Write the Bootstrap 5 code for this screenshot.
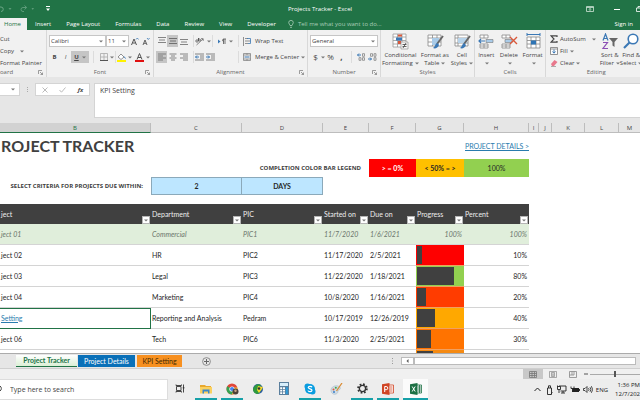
<!DOCTYPE html>
<html lang="en">
<head>
<meta charset="utf-8">
<meta name="viewport" content="width=device-width, initial-scale=1">
<title>Projects Tracker - Excel</title>
<link href="https://cdn.jsdelivr.net/npm/bootstrap@5.3.0/dist/css/bootstrap.min.css" rel="stylesheet">
<style>
body{font:6px/8px "Open Sans","Noto Sans",sans-serif;color:#444;background:#e6e6e6}
svg{display:block;flex:none}
button,.lnk{border:0;background:none;padding:0;color:inherit;font:inherit;text-decoration:none;flex:none}
.cr{width:4px;height:3px;fill:#777}
/* title and ribbon tabs */
.top-bar{background:#217346;color:#fff;flex:none}
.title-row{height:18px}
.tabs-row{height:12px;gap:1px}
.tabs-row .lnk{padding:0 7px;line-height:12px}
.tabs-row .lnk.on{background:#f1f1f1;color:#217346;padding:0 6px 0 4px}
.tell{color:#a9cdb8}
.side{flex:1 1 0}
/* ribbon */
.ribbon{background:#f1f1f1;height:47px;flex:none;overflow:hidden}
.grp{border-right:1px solid #d8d8d8;flex:none;padding:3px 2px 0}
.grp-name{height:9px;line-height:9px;color:#666;text-align:center;position:relative}
.grp-name svg{position:absolute;right:1px;top:2px}
.body35{height:35px}
.rw{height:16px;display:flex;align-items:center}
.ic{width:11px;height:12px;display:flex;align-items:center;justify-content:center}
.ic.on,.ul-on{background:#c5c5c5}
.ic.glyph{font-size:8px}
.ul-on{width:18px;height:12px;display:flex;align-items:center;justify-content:space-evenly}
.dv{width:1px;height:12px;background:#dcdcdc;flex:none}
.car{width:7px;height:12px;display:flex;align-items:center;justify-content:center}
select.pick{appearance:none;border:1px solid #c6c6c6;border-radius:0;background:#fff url("data:image/svg+xml,%3Csvg xmlns='http://www.w3.org/2000/svg' width='4' height='3'%3E%3Cpath d='M0 .5h4L2 2.5z' fill='%23777'/%3E%3C/svg%3E") no-repeat right 2px center;height:12px;padding:0 0 0 1px;color:#444;font:6px/10px "Open Sans",sans-serif}
.w-font{width:57px}.w-size{width:23px}.w-num{width:68px}
.big{display:flex;flex-direction:column;align-items:center;text-align:center;height:35px;white-space:nowrap}
.big svg.pic{width:18px;height:17px;margin-bottom:1px}
.big .cr{display:inline-block;margin-left:2px}
.line3{height:12px;display:flex;align-items:center;gap:2px}
.w-clip{width:47px}.w-fontg{width:107px}.w-align{width:154px}.w-numg{width:73px}.w-styles{width:94px}.w-cells{width:71px}
/* formula bar */
.formula{height:46px;flex:none;padding-top:6px}
.name-box{width:20px;height:13px;background:#fff;border:1px solid #d4d4d4;border-left:0}
.fx-box{width:55px;height:13px;background:#fff;border:1px solid #d4d4d4}
.fx-in{height:35px;border:1px solid #d4d4d4;border-right:0;background:#fff;padding:2px 5px;resize:none;font:7px/9px "Open Sans",sans-serif;color:#444;border-radius:0;display:block;flex:1 1 0;min-width:0}
/* worksheet */
.sheet{background:#fff;min-height:0}
.gridt{table-layout:fixed;width:100%;border-collapse:separate;border-spacing:0;font:7px/9px Lato,"Open Sans",sans-serif;color:#262626}
.gridt td,.gridt th{padding:0 1px;overflow:hidden;white-space:nowrap;vertical-align:middle;font-weight:400}
.heads th{height:10px;background:#e6e6e6;border-right:1px solid #bdbdbd;border-bottom:1px solid #bdbdbd;text-align:center;font:6px/8px "Open Sans",sans-serif;color:#444}
.heads th.on{background:#d2d2d2;color:#217346;border-bottom:1px solid #217346}
.r26 td{height:26px}.r18 td{height:18px}.r9 td{height:9px}
.gridt .big-title{font:700 16px/22px Lato,sans-serif;color:#404040}
.gridt .leg{text-align:center}
.bgr{background:#f00;color:#fff}.bgo{background:#ffc000}.bgg{background:#92d050}
.gridt .pickc{background:#bde6ff;border:1px solid #8ba9ba;text-align:center;font-weight:700}
.gridt .cap{font:700 6px/9px "Open Sans",sans-serif;text-align:right;color:#404040}
.a-blue{color:#2a7cae;text-decoration:underline}
.fields th{height:20px;background:#404040;color:#eee}
.fields .fx{height:20px;display:flex;justify-content:space-between;align-items:flex-end}
.fields .fx span{line-height:18px;align-self:flex-start;padding-top:1px}
.flt{width:8px;height:8px;background:#fff;border:1px solid #b5b5b5;display:flex;align-items:center;justify-content:center}
.rec td{height:21px;border-bottom:1px solid #d4d4d4}
.rec.done td{background:#e0eedb;color:#6b756b;font-style:italic;height:21px}
.rec td.none,.rec.done td.none{background:#fff;border:0}
.rec .num{text-align:right;padding-right:2px}
.rec td.pg{padding:0;border-bottom-color:#f0a060}
.track{height:20px;padding:1px}
.track i{display:block;height:18px;background:#404040}
.c1{background:#fe0000}.c2{background:#92d050}.c3{background:#ff3c00}.c4{background:#ffa800}.c5{background:#ff7300}.c6{background:#f58a12}
.gridt td.sel{box-shadow:inset -1px 0 #217346,inset 0 1px #217346;border-bottom-color:#217346}
/* sheet tabs, status */
.sheet-tabs{height:15px;background:#e6e6e6;border-top:1px solid #ababab;flex:none;font:7px/11px Lato,sans-serif}
.stab{height:12px;line-height:11px;color:#fff}
.stab.on{background:linear-gradient(#fff,#dcefd6);color:#217346;font-weight:700;border-bottom:1px solid #217346;width:61px}
.stab.s2{background:#0a70b8;width:57px;margin:0 2px 0 1px}.stab.s3{background:#f79020;color:#402800;width:45px}
.nav-pad{width:16px}
.scroller{width:38.8%}
.thumb{height:8px;background:#fff;border:1px solid #bbb}
.status{height:11px;background:#f0f0f0;border-top:1px solid #cfcfcf;flex:none}
.vw{width:20px;height:10px;display:flex;align-items:center;justify-content:center}
.vw.on{background:#c8c8c8}
.zoom{width:50px;height:10px;appearance:none;background:linear-gradient(#aaa,#aaa) center/100% 1px no-repeat;margin:0}
.zoom::-webkit-slider-thumb{appearance:none;width:2px;height:6px;background:#555;border-radius:0}
/* taskbar */
.taskbar{height:21px;background:#ededed;flex:none}
.find{width:168px;background:#fff;border:1px solid #ddd;border-left:0;height:21px}
.find input{border:0;background:none;font:7px/12px "Open Sans",sans-serif;color:#333;padding:0;width:130px;outline:0}
.find input::placeholder{color:#444;opacity:1}
.apps{gap:4px;margin-left:1px}
.app{width:22px;height:21px;display:flex;align-items:center;justify-content:center;border-bottom:2px solid transparent}
.app.run{border-bottom-color:#16a0a8}
.app.cur{background:#fbfbfb;width:25px}
.clock{text-align:right;line-height:9px;flex:none;color:#222}
.tray{color:#222;gap:3px}
</style>
<script src="https://cdn.jsdelivr.net/npm/bootstrap@5.3.0/dist/js/bootstrap.bundle.min.js"></script>
</head>
<body class="d-flex flex-column vh-100 overflow-hidden m-0">
<svg width="0" height="0" class="position-absolute" aria-hidden="true">
<symbol id="c" viewBox="0 0 4 3"><path d="M0 .5h4L2 2.5z"/></symbol>
<symbol id="l" viewBox="0 0 5 5"><path d="M.5 4V.5H4M2 2l2.500 2.500M4.500 2.500v2h-2" fill="none" stroke="#777" stroke-width=".7"/></symbol>
</svg>

<header class="top-bar">
 <div class="title-row d-flex align-items-center">
  <div class="side d-flex align-items-center">
   <button aria-label="Undo"><svg width="12" height="8" viewBox="0 0 12 8"><path d="M0 2h1a2.200 2.200 0 010 4.500" fill="none" stroke="#6ba585"/><path d="M8.500 3h3L10 5z" fill="#5d9c79"/></svg></button>
   <button aria-label="Redo" class="ms-2"><svg width="14" height="8" viewBox="0 0 14 8"><path d="M6.500 2.500H3a2 2 0 000 4h1M4.500.5l2.200 2-2.200 2" fill="none" stroke="#5d9c79"/><path d="M11.500 3h2.500l-1.200 2z" fill="#5d9c79"/></svg></button>
   <button aria-label="Customize toolbar" class="ms-2 ps-1"><svg width="4" height="6" viewBox="0 0 4 6"><path d="M0 0h4v1H0zM0 2.500h4L2 5z" fill="#fff"/></svg></button>
  </div>
  <div>Projects Tracker - Excel</div>
  <div class="side d-flex align-items-center justify-content-end">
   <button aria-label="Ribbon display" class="me-3"><svg width="8" height="6" viewBox="0 0 8 6"><path d="M.5.5h7v5h-7zM.5 1.500h7M4 5V2.500M3 3.500l1-1 1 1" fill="none" stroke="#cfe3d7" stroke-width=".8"/></svg></button>
   <button aria-label="Minimize" class="ms-1 me-3"><svg width="6" height="6" viewBox="0 0 6 6"><path d="M0 3.500h6" stroke="#fff"/></svg></button>
   <button aria-label="Restore"><svg width="4" height="6" viewBox="0 0 4 6"><path d="M4 2H.5v3.500H4M2 2V.5h2" fill="none" stroke="#fff" stroke-width=".8"/></svg></button>
  </div>
 </div>
 <nav class="tabs-row d-flex">
  <a href="#" class="lnk on">Home</a><a href="#" class="lnk">Insert</a><a href="#" class="lnk">Page Layout</a><a href="#" class="lnk">Formulas</a><a href="#" class="lnk">Data</a><a href="#" class="lnk">Review</a><a href="#" class="lnk">View</a><a href="#" class="lnk">Developer</a>
  <button class="tell d-flex align-items-center gap-1 ps-1"><svg width="6" height="8" viewBox="0 0 6 8"><path d="M2 5.500C2 4.500.7 4 .7 2.700a2.300 2.300 0 014.600 0C5.300 4 4 4.500 4 5.500zM2 7.300h2" fill="none" stroke="#a9cdb8" stroke-width=".8"/></svg>Tell me what you want to do...</button>
  <a href="#" class="lnk ms-auto">Sign in</a>
 </nav>
</header>

<section class="ribbon d-flex">
 <div class="grp w-clip ps-0">
  <div class="body35">
   <button class="line3">Cut</button>
   <button class="line3">Copy <svg class="cr ms-1"><use href="#c"/></svg></button>
   <button class="line3 text-nowrap">Format Painter</button>
  </div>
  <div class="grp-name text-start">oard<svg width="5" height="5"><use href="#l"/></svg></div>
 </div>
 <div class="grp w-fontg">
  <div class="body35">
   <div class="rw"><select class="pick w-font" aria-label="Font"><option>Calibri</option></select><select class="pick w-size" aria-label="Font size"><option>11</option></select>
    <button class="ic" aria-label="Grow font"><svg width="8" height="9" viewBox="0 0 8 9"><path d="M.5 8L3 2l2.500 6M1.500 6h3" fill="none" stroke="#555"/><path d="M5 2.500L6.300 1l1.300 1.500" fill="none" stroke="#3b78b5" stroke-width=".8"/></svg></button>
    <button class="ic" aria-label="Shrink font"><svg width="8" height="9" viewBox="0 0 8 9"><path d="M1 8l2-5 2 5M1.800 6.300h2.400" fill="none" stroke="#555" stroke-width=".9"/><path d="M5 1l1.300 1.500L7.600 1" fill="none" stroke="#3b78b5" stroke-width=".8"/></svg></button></div>
   <div class="rw"><button class="ic fw-bold">B</button><button class="ic fst-italic">I</button><button class="ul-on" aria-label="Underline"><b class="text-decoration-underline">U</b><svg class="cr"><use href="#c"/></svg></button><span class="dv ms-1"></span>
    <button class="ic ms-1" aria-label="Borders"><svg width="8" height="8" viewBox="0 0 8 8"><path d="M.5.5h7v7h-7zM4 .5v7M.5 4h7" fill="none" stroke="#aaa" stroke-width=".8"/><path d="M0 7.500h8" stroke="#555"/></svg></button><span class="car"><svg class="cr"><use href="#c"/></svg></span><span class="dv"></span>
    <button class="ic" aria-label="Fill color"><svg width="9" height="9" viewBox="0 0 9 9"><path d="M1 4l3-3 3 3-3 2.500z" fill="#fff" stroke="#777" stroke-width=".8"/><path d="M7 3.500l1.500 2" stroke="#3b78b5"/><path d="M0 7h9v2H0z" fill="#fff200"/></svg></button><span class="car"><svg class="cr"><use href="#c"/></svg></span>
    <button class="ic" aria-label="Font color"><svg width="9" height="9" viewBox="0 0 9 9"><path d="M2 6.500l2.500-6 2.500 6M3 4.500h3" fill="none" stroke="#555"/><path d="M0 7h9v2H0z" fill="#e01010"/></svg></button><span class="car"><svg class="cr"><use href="#c"/></svg></span></div>
  </div>
  <div class="grp-name">Font<svg width="5" height="5"><use href="#l"/></svg></div>
 </div>
 <div class="grp w-align">
  <div class="body35 d-flex">
   <div>
    <div class="rw"><button class="ic" aria-label="Top"><svg width="8" height="8" viewBox="0 0 8 8"><path d="M0 .5h8M1 3h6M0 5.500h8" stroke="#777" stroke-width=".9"/></svg></button><button class="ic on" aria-label="Middle"><svg width="8" height="8" viewBox="0 0 8 8"><path d="M0 1.500h8M1 4h6M0 6.500h8" stroke="#666" stroke-width=".9"/></svg></button><button class="ic" aria-label="Bottom"><svg width="8" height="8" viewBox="0 0 8 8"><path d="M0 2.500h8M1 5h6M0 7.500h8" stroke="#777" stroke-width=".9"/></svg></button><span class="dv ms-1"></span>
     <button class="ic" aria-label="Orientation"><svg width="9" height="9" viewBox="0 0 9 9"><path d="M1.500 8L8 2M6 1.700l2.200 0v2.200" fill="none" stroke="#666" stroke-width=".8"/><circle cx="2" cy="4" r="1.200" fill="none" stroke="#555" stroke-width=".8"/><path d="M3.500 1v3" stroke="#555"/><circle cx="4.500" cy="3" r="1" fill="none" stroke="#555" stroke-width=".8"/></svg></button><span class="car"><svg class="cr"><use href="#c"/></svg></span><span class="dv"></span></div>
    <div class="rw"><button class="ic on" aria-label="Left"><svg width="8" height="8" viewBox="0 0 8 8"><path d="M0 1h8M0 3h5M0 5h8M0 7h5" stroke="#777" stroke-width=".9"/></svg></button><button class="ic" aria-label="Center"><svg width="8" height="8" viewBox="0 0 8 8"><path d="M.5 1h7M2 3h4M.5 5h7M2 7h4" stroke="#777" stroke-width=".9"/></svg></button><button class="ic" aria-label="Right"><svg width="8" height="8" viewBox="0 0 8 8"><path d="M0 1h8M3 3h5M0 5h8M3 7h5" stroke="#777" stroke-width=".9"/></svg></button><span class="dv ms-1"></span>
     <button class="ic" aria-label="Decrease indent"><svg width="9" height="8" viewBox="0 0 9 8"><path d="M0 1h9M5 3h4M5 5h4M0 7h9" stroke="#777" stroke-width=".9"/><path d="M4 4H.5M2 2.500L.5 4 2 5.500" stroke="#3b78b5" fill="none"/></svg></button><button class="ic" aria-label="Increase indent"><svg width="9" height="8" viewBox="0 0 9 8"><path d="M0 1h9M5 3h4M5 5h4M0 7h9" stroke="#777" stroke-width=".9"/><path d="M0 4h3.500M2 2.500L3.500 4 2 5.500" stroke="#3b78b5" fill="none"/></svg></button></div>
   </div>
   <div class="rw"><button class="ic" aria-label="Text direction"><svg width="8" height="7" viewBox="0 0 8 7"><path d="M0 1.500L2.500 3.500 0 5.500z" fill="#3b78b5"/><path d="M5.500 6V1H8M7 1v5M5.500 1a1.300 1.300 0 000 2.500" fill="none" stroke="#555" stroke-width=".8"/></svg></button><span class="car"><svg class="cr"><use href="#c"/></svg></span></div>
   <div class="ms-1">
    <div class="rw"><span class="dv me-1"></span><button class="d-flex align-items-center gap-1"><svg width="8" height="9" viewBox="0 0 8 9"><path d="M.5 0v9M2 1.500h3M2 4h5.500M2 6.500h3" stroke="#777" stroke-width=".8"/><path d="M4 1.500h3.500v5H5" stroke="#3b78b5" fill="none" stroke-width=".8"/></svg>Wrap Text</button></div>
    <div class="rw"><span class="dv me-1"></span><button class="d-flex align-items-center gap-1 text-nowrap"><svg width="8" height="8" viewBox="0 0 8 8"><path d="M.5.5h7v7h-7zM.5 2h7M.5 6h7M4 .5V2M4 6v1.500" fill="none" stroke="#777" stroke-width=".7"/><path d="M1.500 4h5" stroke="#3b78b5"/></svg>Merge &amp; Center</button><span class="car"><svg class="cr"><use href="#c"/></svg></span></div>
   </div>
  </div>
  <div class="grp-name">Alignment<svg width="5" height="5"><use href="#l"/></svg></div>
 </div>
 <div class="grp w-numg">
  <div class="body35">
   <div class="rw"><select class="pick w-num" aria-label="Number format"><option>General</option></select></div>
   <div class="rw"><button class="ic glyph">$</button><span class="car"><svg class="cr"><use href="#c"/></svg></span><button class="ic glyph">%</button><button class="ic glyph fw-bold">,</button><span class="dv mx-1"></span>
    <button class="ic" aria-label="Increase decimal"><svg width="9" height="8" viewBox="0 0 9 8"><path d="M4 2H.5M2 .5L.5 2 2 3.500" stroke="#3b78b5" fill="none"/><path d="M5.500.7h2v2.600h-2zM2 4.700h2v2.600H2zM5.500 4.700h2v2.600h-2z" fill="none" stroke="#777" stroke-width=".7"/></svg></button><button class="ic" aria-label="Decrease decimal"><svg width="9" height="8" viewBox="0 0 9 8"><path d="M0 6h3.500M2 4.500L3.500 6 2 7.500" stroke="#3b78b5" fill="none"/><path d="M2.500.7h2v2.600h-2zM6 .7h2v2.600H6zM6 4.700h2v2.600H6z" fill="none" stroke="#777" stroke-width=".7"/></svg></button></div>
  </div>
  <div class="grp-name">Number<svg width="5" height="5"><use href="#l"/></svg></div>
 </div>
 <div class="grp w-styles px-0">
  <div class="body35 d-flex justify-content-around">
   <button class="big"><svg class="pic" viewBox="0 0 18 17"><path d="M2 1h13v13H2zM2 4h13M2 7.500h13M2 11h13M6.500 1v13M11 1v13" fill="#fff" stroke="#999" stroke-width=".8"/><path d="M7 1.500h4v2H7zM7 8h3v3H7z" fill="#d9583b"/><path d="M5 4.500h6v3H5z" fill="#3b78b5"/><path d="M10 9h7v7h-7z" fill="#f5f5f5" stroke="#888" stroke-width=".6"/><path d="M11.500 11.500h4M11.500 13.500h4M15 10l-3 5" stroke="#444" stroke-width=".8"/></svg><span>Conditional<br>Formatting<svg class="cr"><use href="#c"/></svg></span></button>
   <button class="big"><svg class="pic" viewBox="0 0 18 17"><path d="M2 2h13v11H2zM2 5h13M2 9h13M6.500 2v11M11 2v11" fill="#fff" stroke="#888" stroke-width=".8"/><path d="M6 5h7v7H6z" fill="#a9cbe8"/><path d="M17 3l-6 8" stroke="#666" stroke-width="1.800"/><path d="M11 10l2 2c-1 3-4 4-6 3 2-1 2-4 4-5z" fill="#3b78b5"/></svg><span>Format as<br>Table<svg class="cr"><use href="#c"/></svg></span></button>
   <button class="big"><svg class="pic" viewBox="0 0 18 17"><path d="M2 2h13v11H2zM2 5h13M2 10h13M5 2v11" fill="#fff" stroke="#888" stroke-width=".8"/><path d="M5 5h9v5H5z" fill="#b7d3ea"/><path d="M17 3l-6 8" stroke="#666" stroke-width="1.800"/><path d="M11 10l2 2c-1 3-4 4-6 3 2-1 2-4 4-5z" fill="#3b78b5"/></svg><span>Cell<br>Styles<svg class="cr"><use href="#c"/></svg></span></button>
  </div>
  <div class="grp-name">Styles</div>
 </div>
 <div class="grp w-cells px-0">
  <div class="body35 d-flex justify-content-around">
   <button class="big"><svg class="pic" viewBox="0 0 18 17"><path d="M3 2h8v3H3zM7 2v3M3 11h8v4H3zM7 11v4M3 13h8" fill="#fff" stroke="#888" stroke-width=".8"/><path d="M9 6.500h7v3H9z" fill="#a9cbe8" stroke="#777" stroke-width=".6"/><path d="M8 8H2M4 6L2 8l2 2" stroke="#3b78b5" fill="none" stroke-width="1.200"/></svg><span>Insert<br><svg class="cr"><use href="#c"/></svg></span></button>
   <button class="big"><svg class="pic" viewBox="0 0 18 17"><path d="M2 2h8v3H2zM6 2v3M2 11h8v4H2zM6 11v4M2 13h8" fill="#fff" stroke="#888" stroke-width=".8"/><path d="M5 6.500h7v3H5z" fill="#a9cbe8" stroke="#777" stroke-width=".6"/><path d="M10 4l7 7M17 4l-7 7" stroke="#d9583b" stroke-width="1.400"/></svg><span>Delete<br><svg class="cr"><use href="#c"/></svg></span></button>
   <button class="big"><svg class="pic" viewBox="0 0 18 17"><path d="M3 4h13v11H3zM3 7.500h13M3 11h13M7 4v11M12 4v11" fill="#fff" stroke="#888" stroke-width=".8"/><path d="M7 7.500h5v4H7z" fill="#2f75b5"/><path d="M3 1.500h13M3 0v3M16 0v3" stroke="#3b78b5"/></svg><span>Format<br><svg class="cr"><use href="#c"/></svg></span></button>
  </div>
  <div class="grp-name">Cells</div>
 </div>
 <div class="grp flex-fill border-0 ps-1 pe-0">
  <div class="body35 d-flex">
   <div>
    <button class="line3"><svg width="8" height="8" viewBox="0 0 8 8"><path d="M7 2V.8H1L4 4 1 7.200h6V6" fill="none" stroke="#444" stroke-width="1.200"/></svg>AutoSum<svg class="cr ms-1"><use href="#c"/></svg></button>
    <button class="line3"><svg width="8" height="8" viewBox="0 0 8 8"><path d="M.5.5h7v7h-7zM.5 2h7" fill="#fff" stroke="#777" stroke-width=".8"/><path d="M4 2.500V6M2.500 4.500L4 6.200l1.500-1.700" stroke="#3b78b5" fill="none"/></svg>Fill<svg class="cr"><use href="#c"/></svg></button>
    <button class="line3"><svg width="8" height="8" viewBox="0 0 8 8"><path d="M1 5l3.500-4L7.500 3 4 7H2z" fill="#e8788c"/><path d="M1 7.500h5" stroke="#999" stroke-width=".8"/></svg>Clear<svg class="cr"><use href="#c"/></svg></button>
   </div>
   <button class="big ms-1"><svg class="pic" viewBox="0 0 18 17"><path d="M2 7.500L4.500 1 7 7.500M3 5.500h3" fill="none" stroke="#3b78b5" stroke-width="1.200"/><path d="M2 9.500h4.500L2 15.500h5" fill="none" stroke="#8a4fb5" stroke-width="1.200"/><path d="M8 5h9l-3.500 4v5l-2-1.500V9z" fill="#666"/></svg><span>Sort &amp;<br>Filter<svg class="cr"><use href="#c"/></svg></span></button>
   <button class="big"><svg class="pic" viewBox="0 0 18 17"><circle cx="11" cy="6" r="4.800" fill="#fff" stroke="#3b78b5" stroke-width="1.600"/><path d="M7.500 9.500L2 15" stroke="#3b78b5" stroke-width="2.200"/></svg><span>Find &amp;<br>Select<svg class="cr"><use href="#c"/></svg></span></button>
  </div>
  <div class="grp-name">Editing</div>
 </div>
</section>

<section class="formula d-flex">
 <div class="name-box d-flex align-items-center justify-content-end pe-1"><svg class="cr"><use href="#c"/></svg></div>
 <svg width="15" height="13" viewBox="0 0 15 13"><path d="M7 4h1v1H7zM7 6h1v1H7zM7 8h1v1H7z" fill="#aaa"/></svg>
 <div class="fx-box d-flex align-items-center justify-content-around">
  <button aria-label="Cancel"><svg width="6" height="6" viewBox="0 0 6 6"><path d="M.5.5l5 5M5.500.5l-5 5" stroke="#bbb"/></svg></button>
  <button aria-label="Enter"><svg width="7" height="6" viewBox="0 0 7 6"><path d="M.5 3l2 2.200L6.500.5" fill="none" stroke="#bbb"/></svg></button>
  <button class="fst-italic fw-bold">fx</button>
 </div>
 <textarea class="fx-in ms-1" aria-label="Formula">KPI Setting</textarea>
</section>

<main class="sheet flex-grow-1 overflow-hidden">
 <table class="gridt">
  <colgroup><col style="width:151px"><col style="width:91px"><col style="width:81px"><col style="width:46px"><col style="width:47px"><col style="width:48px"><col style="width:65px"><col style="width:10px"><col style="width:13px"><col style="width:33px"><col style="width:34px"><col></colgroup>
  <tr class="heads"><th class="on">B</th><th>C</th><th>D</th><th>E</th><th>F</th><th>G</th><th>H</th><th>I</th><th>J</th><th>K</th><th>L</th><th class="border-end-0">M</th></tr>
  <tr class="r26"><td colspan="5" class="big-title">ROJECT TRACKER</td><td></td><td class="text-center"><a href="#" class="a-blue">PROJECT DETAILS &gt;</a></td><td colspan="5"></td></tr>
  <tr class="r18"><td></td><td colspan="3" class="cap pe-2">COMPLETION COLOR BAR LEGEND</td><td class="leg bgr fw-bold">&gt; = 0%</td><td class="leg bgo fw-bold">&lt; 50% = &gt;</td><td class="leg bgg">100%</td><td colspan="5"></td></tr>
  <tr class="r18"><td class="cap pe-2">SELECT CRITERIA FOR PROJECTS DUE WITHIN:</td><td class="pickc">2</td><td class="pickc border-start-0">DAYS</td><td colspan="9"></td></tr>
  <tr class="r9"><td colspan="12"></td></tr>
  <tr class="fields"><th><div class="fx"><span>ject</span><button class="flt" aria-label="Filter project"><svg class="cr"><use href="#c"/></svg></button></div></th><th><div class="fx"><span>Department</span><button class="flt" aria-label="Filter department"><svg class="cr"><use href="#c"/></svg></button></div></th><th><div class="fx"><span>PIC</span><button class="flt" aria-label="Filter PIC"><svg class="cr"><use href="#c"/></svg></button></div></th><th><div class="fx"><span>Started on</span><button class="flt" aria-label="Filter start"><svg class="cr"><use href="#c"/></svg></button></div></th><th><div class="fx"><span>Due on</span><button class="flt" aria-label="Filter due"><svg class="cr"><use href="#c"/></svg></button></div></th><th><div class="fx"><span>Progress</span><button class="flt" aria-label="Filter progress"><svg class="cr"><use href="#c"/></svg></button></div></th><th><div class="fx"><span>Percent</span><button class="flt" aria-label="Filter percent"><svg class="cr"><use href="#c"/></svg></button></div></th><td colspan="5"></td></tr>
  <tr class="rec done"><td>ject 01</td><td>Commercial</td><td>PIC1</td><td>11/7/2020</td><td>1/6/2021</td><td class="num">100%</td><td class="num">100%</td><td colspan="5" class="none"></td></tr>
  <tr class="rec"><td>ject 02</td><td>HR</td><td>PIC2</td><td>11/17/2020</td><td>2/5/2021</td><td class="pg"><div class="track c1"><i style="width:10%"></i></div></td><td class="num">10%</td><td colspan="5" class="none"></td></tr>
  <tr class="rec"><td>ject 03</td><td>Legal</td><td>PIC3</td><td>11/22/2020</td><td>1/18/2021</td><td class="pg"><div class="track c2"><i style="width:80%"></i></div></td><td class="num">80%</td><td colspan="5" class="none"></td></tr>
  <tr class="rec"><td>ject 04</td><td>Marketing</td><td>PIC4</td><td>10/8/2020</td><td>1/16/2021</td><td class="pg"><div class="track c3"><i style="width:20%"></i></div></td><td class="num">20%</td><td colspan="5" class="none"></td></tr>
  <tr class="rec"><td class="sel"><a href="#" class="a-blue">Setting</a></td><td>Reporting and Analysis</td><td>Pedram</td><td>10/17/2019</td><td>12/26/2019</td><td class="pg"><div class="track c4"><i style="width:40%"></i></div></td><td class="num">40%</td><td colspan="5" class="none"></td></tr>
  <tr class="rec"><td>ject 06</td><td>Tech</td><td>PIC6</td><td>11/3/2020</td><td>2/25/2021</td><td class="pg"><div class="track c5"><i style="width:30%"></i></div></td><td class="num">30%</td><td colspan="5" class="none"></td></tr>
  <tr class="rec"><td></td><td></td><td></td><td></td><td></td><td class="pg"><div class="track c6"><i style="width:35%"></i></div></td><td></td><td colspan="5" class="none"></td></tr>
 </table>
</main>

<div class="sheet-tabs d-flex align-items-center">
 <span class="nav-pad"></span>
 <button class="stab on">Project Tracker</button><button class="stab s2">Project Details</button><button class="stab s3">KPI Setting</button>
 <button class="ms-3 ps-1" aria-label="New sheet"><svg width="9" height="9" viewBox="0 0 9 9"><path d="M4.500 2v5M2 4.500h5" stroke="#666"/><circle cx="4.500" cy="4.500" r="3.900" fill="none" stroke="#777" stroke-width=".8"/></svg></button>
 <div class="d-flex align-items-center ms-auto scroller">
  <svg width="9" height="8" viewBox="0 0 9 8"><path d="M0 1h1v1H0zM0 3.500h1v1H0zM0 6h1v1H0z" fill="#999"/></svg>
  <button class="thumb d-flex align-items-center px-1" aria-label="Scroll left"><svg width="3" height="4" viewBox="0 0 3 4"><path d="M2.500 0v4L.5 2z" fill="#555"/></svg></button>
  <div class="thumb flex-fill me-1"></div>
 </div>
</div>
<div class="status d-flex align-items-center justify-content-end">
 <button class="vw on" aria-label="Normal"><svg width="8" height="7" viewBox="0 0 8 7"><path d="M.5.5h7v6h-7zM.5 2.500h7M.5 4.500h7M3 .5v6M5.500.5v6" fill="none" stroke="#777" stroke-width=".8"/></svg></button>
 <button class="vw" aria-label="Page layout"><svg width="8" height="7" viewBox="0 0 8 7"><path d="M.5.5h7v6h-7zM2.500 1.500h3v4h-3zM3 3h2M3 4.200h2" fill="none" stroke="#888" stroke-width=".7"/></svg></button>
 <button class="vw" aria-label="Page break"><svg width="8" height="7" viewBox="0 0 8 7"><path d="M.5.5h7v6h-7zM.5 4h4.500V.5M3 .5V4" fill="none" stroke="#888" stroke-width=".8"/></svg></button>
 <button aria-label="Zoom out"><svg width="7" height="2"><path d="M1 1h4" stroke="#555"/></svg></button>
 <input type="range" class="zoom" aria-label="Zoom" value="50">
</div>

<footer class="taskbar d-flex align-items-center overflow-hidden">
 <div class="find d-flex align-items-center flex-shrink-0"><svg width="10" height="9" viewBox="0 0 10 9"><path d="M0 1a3 3 0 010 5" fill="none" stroke="#444"/></svg><input type="text" placeholder="Type here to search" aria-label="Search"></div>
 <div class="d-flex apps">
  <button class="app" aria-label="Task view"><svg width="10" height="9" viewBox="0 0 10 9"><path d="M1.500 2.500h4.500v4H1.500zM1 .5v1h5.500v-1M1 8.500v-1h5.500v1M8.500.5v8" fill="none" stroke="#333" stroke-width=".9"/><path d="M7.800 3h1.500v1.500H7.800z" fill="#333"/></svg></button>
  <button class="app run" aria-label="File Explorer"><svg width="12" height="10" viewBox="0 0 12 10"><path d="M0 1h5l1 1h5v7H0z" fill="#e8a82d"/><path d="M0 3h12v6.500H0z" fill="#fad160"/><path d="M2.500 5.500h7v4H8V7.500H4v2H2.500z" fill="#3c87c8"/></svg></button>
  <button class="app run" aria-label="Chrome"><svg width="13" height="12" viewBox="0 0 13 12"><circle cx="6" cy="6" r="5.500" fill="#e0473a"/><path d="M1.200 3.300A5.500 5.500 0 006 11.500L8 7z" fill="#35a352"/><path d="M11.300 4.500A5.500 5.500 0 016 11.500l2.500-7z" fill="#f6c934"/><circle cx="6" cy="6" r="2.600" fill="#fff"/><circle cx="6" cy="6" r="2" fill="#4285f4"/><circle cx="9.500" cy="8.500" r="3" fill="#4c4038"/><circle cx="9.500" cy="7.700" r="1.200" fill="#c7a287"/></svg></button>
  <button class="app" aria-label="Download manager"><svg width="12" height="12" viewBox="0 0 12 12"><circle cx="6" cy="6" r="5" fill="#2c5f9e"/><path d="M1 6c1-4 5-6 8-4L7 5l3 1-4 5C3 11 1 9 1 6z" fill="#2f9a3c"/><path d="M6 3l5 1-1 2-3 4-2-3z" fill="#f2d92c"/><circle cx="7" cy="5.500" r="1.300" fill="#333"/></svg></button>
  <button class="app" aria-label="Calculator"><svg width="10" height="13" viewBox="0 0 10 13"><path d="M0 0h10v13H0z" fill="#5b7f9d"/><path d="M1 1h8v3H1z" fill="#d7eefb"/><path d="M1.200 5.200h2v1.800h-2zM4 5.200h2v1.800H4zM1.200 7.800h2v1.800h-2zM4 7.800h2v1.800H4zM1.200 10.300h2v1.800h-2zM4 10.300h2v1.800H4z" fill="#fff"/><path d="M6.800 5.200h2v6.900h-2z" fill="#2f9bd8"/></svg></button>
  <button class="app run" aria-label="Skype"><svg width="12" height="12" viewBox="0 0 12 12"><circle cx="6" cy="6" r="5" fill="#0a9de0"/><circle cx="3.500" cy="3.500" r="3" fill="#0a9de0"/><circle cx="8.500" cy="8.500" r="3" fill="#0a9de0"/><path d="M8 4.300C7.500 3 4.200 3 4.200 4.600 4.200 6.200 8 5.600 8 7.300 8 9 4.300 9 4 7.500" fill="none" stroke="#fff" stroke-width="1.200"/></svg></button>
  <button class="app" aria-label="Paint"><svg width="13" height="12" viewBox="0 0 13 12"><path d="M1 7c0-3 4-5 7-4s3 3 1 4 0 3-3 4-5-1-5-4z" fill="#cfdce6" stroke="#9fb2c0" stroke-width=".5"/><circle cx="3.500" cy="6.500" r="1" fill="#e05a3a"/><circle cx="5.800" cy="4.800" r="1" fill="#48a64a"/><circle cx="4" cy="9" r="1" fill="#3a7ec8"/><path d="M12 0L6.500 8" stroke="#d98b32" stroke-width="1.300"/></svg></button>
  <button class="app run" aria-label="Settings"><svg width="11" height="11" viewBox="0 0 11 11"><circle cx="5.500" cy="5.500" r="4.300" fill="none" stroke="#333" stroke-width="2" stroke-dasharray="1.700 1.680"/><circle cx="5.500" cy="5.500" r="3.100" fill="none" stroke="#333" stroke-width="1.300"/></svg></button>
  <button class="app run" aria-label="PowerPoint"><svg width="12" height="12" viewBox="0 0 12 12"><path d="M6 2h5.500v8H6z" fill="#fff" stroke="#d04525" stroke-width=".8"/><path d="M8 4h2.500M8 6h2.500M8 8h2.500" stroke="#d04525" stroke-width=".8"/><path d="M0 1.200L7.500 0v12L0 10.800z" fill="#d04525"/><path d="M2.700 9V3.500h1.500a1.500 1.500 0 010 3.200H2.700" fill="none" stroke="#fff"/></svg></button>
  <button class="app run cur" aria-label="Excel"><svg width="12" height="12" viewBox="0 0 12 12"><path d="M6 2h5.500v8H6z" fill="#fff" stroke="#1d7044" stroke-width=".8"/><path d="M8 4h3M8 6h3M8 8h3M9.500 2v8" stroke="#1d7044" stroke-width=".8"/><path d="M0 1.200L7.500 0v12L0 10.800z" fill="#1d7044"/><path d="M2.200 3.500l3 5M5.200 3.500l-3 5" stroke="#fff"/></svg></button>
 </div>
 <div class="tray d-flex align-items-center ms-auto flex-shrink-0">
  <svg width="9" height="9" viewBox="0 0 9 9"><path d="M1.500 6l3-3 3 3" fill="none" stroke="#222"/></svg>
  <svg width="9" height="10" viewBox="0 0 9 10"><path d="M2.500 3h4v6.500h-4zM3.500 3V.8h2V3M5.500 9.500l2-2" fill="none" stroke="#222" stroke-width=".9"/></svg>
  <svg width="10" height="9" viewBox="0 0 10 9"><path d="M2 1h7v5H3.500M6 6v2M4 8h4M.5.500v4h3v-3H.5M2 5v3" fill="none" stroke="#222" stroke-width=".9"/></svg>
  <svg width="10" height="9" viewBox="0 0 10 9"><path d="M3 3h6v4H2z" fill="#222"/><path d="M1 1.500v2h3v-2M2.500 3.500V7M9.500 4v2" fill="none" stroke="#222" stroke-width=".9"/></svg>
  <svg width="10" height="9" viewBox="0 0 10 9"><path d="M.5 3.500h1.500L4 1.500v6L2 5.500H.5zM5.500 3.200q1 1.300 0 2.600M7 2.200q1.800 2.300 0 4.600M8.400 1.200q2.400 3.300 0 6.600" fill="none" stroke="#222" stroke-width=".8"/></svg>
  <span>ENG</span>
  <div class="clock ms-1">1:36 PM<br>12/7/202</div>
 </div>
</footer>
</body>
</html>
